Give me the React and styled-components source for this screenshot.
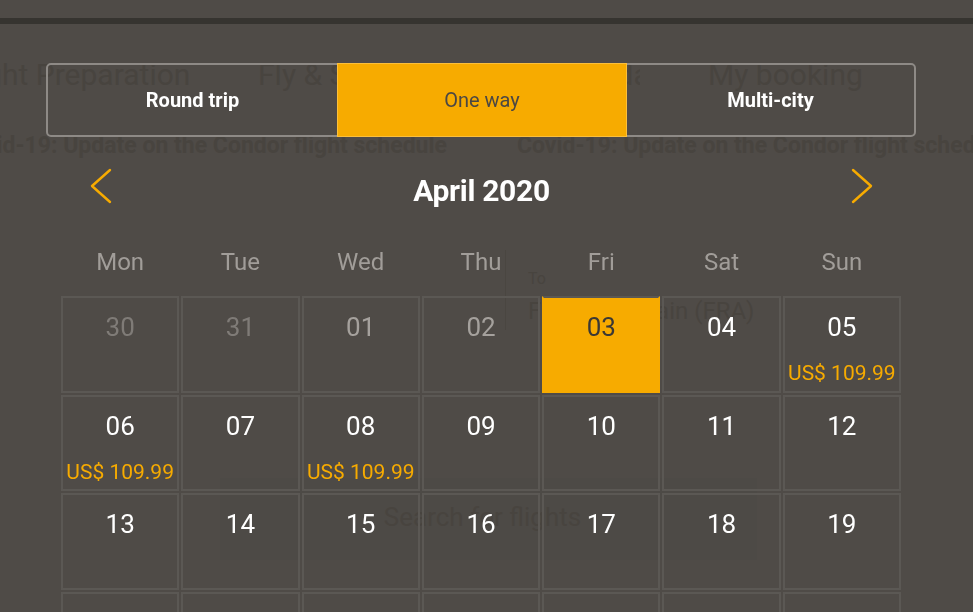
import React, { useState } from "react";
import styled, { createGlobalStyle, css } from "styled-components";

const sans = `Roboto, "Liberation Sans", sans-serif`;

const GlobalStyle = createGlobalStyle`
  html, body {
    margin: 0;
    padding: 0;
    overflow: hidden;
    background: #4f4b47;
    font-family: ${sans};
  }
  * { box-sizing: border-box; }
`;

// --- page behind the modal (seen only faintly through the overlay) ---
const Page = styled.div`
  min-height: 100vh;
  color: #48443f;
  white-space: nowrap;
`;

const TopBand = styled.div`
  height: 24px;
  border-bottom: 6px solid #363430;
`;

const GhostNav = styled.nav`
  display: grid;
  grid-template-columns: 236px 382px 160px;
  column-gap: 68px;
  margin: 33px 0 0 -46px;
  font-size: 30px;
  & > span { overflow: hidden; }
`;

const GhostNews = styled.div`
  display: grid;
  grid-template-columns: 490px 490px;
  column-gap: 70px;
  margin: 40px 0 0 -43px;
  font-weight: bold;
  font-size: 23px;
`;

const GhostField = styled.div`
  margin: 91px 0 0 505px;
  width: 260px;
  height: 80px;
  border-left: 1px solid #4a4641;
  padding: 19px 0 0 22px;
  font-size: 24px;
  & small { display: block; font-size: 16px; margin-bottom: 9px; }
`;

const GhostButton = styled.div`
  display: flex;
  align-items: center;
  justify-content: center;
  width: 537px;
  height: 82px;
  margin: 148px 0 0 220px;
  padding: 0 12px 4px 0;
  background: #4d4a46;
  font-size: 26px;
`;

// --- modal ---
const Overlay = styled.div`
  position: fixed;
  inset: 0;
  overflow: hidden;
`;

const Modal = styled.div`
  width: 870px;
  margin: 63px 0 0 46px;
`;

const Tabs = styled.div`
  display: grid;
  grid-template-columns: 289px 290px 1fr;
  height: 74px;
  border: 2px solid #8e8a86;
  border-radius: 5px;
`;

const Tab = styled.button`
  border: none;
  background: transparent;
  color: #ffffff;
  font: bold 20px ${sans};
  cursor: pointer;
  ${(p) =>
    p.$active &&
    css`
      margin: -2px 0;
      background: #f7ab00;
      border: 1px solid #fbbf3c;
      color: #4b4743;
      font-weight: normal;
    `}
`;

const CalHeader = styled.div`
  display: flex;
  align-items: center;
  justify-content: space-between;
  height: 50px;
  margin-top: 28px;
  padding: 0 43px 0 44px;
`;

const Title = styled.h2`
  margin: 0;
  color: #ffffff;
  font: bold 30px ${sans};
  letter-spacing: -0.3px;
`;

const Arrow = styled.button`
  display: flex;
  padding: 0;
  border: none;
  background: none;
  cursor: pointer;
  margin-top: -9px;
`;

const Weekdays = styled.div`
  display: grid;
  grid-template-columns: repeat(7, 1fr);
  column-gap: 2px;
  align-items: center;
  height: 52px;
  margin: 21px 15px 0;
  color: #a19d99;
  font-size: 24px;
  text-align: center;
`;

const Grid = styled.div`
  display: grid;
  grid-template-columns: repeat(7, 1fr);
  grid-auto-rows: 96.5px;
  gap: 2px;
  margin: 8px 15px 0;
`;

const tones = {
  muted: "#7f7b77",
  past: "#a5a19d",
  normal: "#ffffff",
  selected: "#3b3834",
};

const Cell = styled.div`
  display: flex;
  flex-direction: column;
  align-items: center;
  padding-top: 15px;
  border: 2px solid #5b5854;
  color: ${(p) => tones[p.$tone]};
  cursor: pointer;
  ${(p) =>
    p.$tone === "selected" &&
    css`
      background: #f7ab00;
      border-color: #f7ab00;
      border-top: 2px solid #5b5854;
    `}
`;

const DayNum = styled.span`
  font-size: 26px;
  line-height: 28px;
`;

const Price = styled.span`
  margin-top: 19px;
  color: #f7ab00;
  font-size: 21px;
  line-height: 26px;
  white-space: nowrap;
`;

const Chevron = ({ dir }) => (
  <svg width="22" height="36" viewBox="0 0 22 36">
    <polyline
      points={dir === "left" ? "20,2 2,18 20,34" : "2,2 20,18 2,34"}
      fill="none"
      stroke="#f7ab00"
      strokeWidth="2.4"
      strokeLinecap="round"
      strokeLinejoin="round"
    />
  </svg>
);

const price = "US$ 109.99";
const pad = (n) => String(n).padStart(2, "0");

const days = [
  { d: 30, tone: "muted" },
  { d: 31, tone: "muted" },
  { d: 1, tone: "past" },
  { d: 2, tone: "past" },
  ...Array.from({ length: 28 }, (_, i) => ({ d: i + 3, tone: "normal" })),
  { d: 1, tone: "muted" },
  { d: 2, tone: "muted" },
  { d: 3, tone: "muted" },
];
const prices = new Set([5, 6, 8]);

function App() {
	const [tab, setTab] = useState("One way");
	const [selected, setSelected] = useState(3);

	return (
		<>
			<GlobalStyle />
			<Page>
				<TopBand />
				<GhostNav>
					<span>Flight Preparation</span>
					<span>Fly &amp; Stay with Condor Holiday and</span>
					<span>My booking</span>
				</GhostNav>
				<GhostNews>
					<span>Covid-19: Update on the Condor flight schedule</span>
					<span>Covid-19: Update on the Condor flight schedule</span>
				</GhostNews>
				<GhostField>
					<small>To</small>
					Frankfurt/Main (FRA)
				</GhostField>
				<GhostButton>Search for flights</GhostButton>
			</Page>

			<Overlay>
				<Modal>
					<Tabs>
						{["Round trip", "One way", "Multi-city"].map((t) => (
							<Tab key={t} $active={t === tab} onClick={() => setTab(t)}>{t}</Tab>
						))}
					</Tabs>

					<CalHeader>
						<Arrow aria-label="Previous month"><Chevron dir="left" /></Arrow>
						<Title>April 2020</Title>
						<Arrow aria-label="Next month"><Chevron dir="right" /></Arrow>
					</CalHeader>

					<Weekdays>
						{["Mon", "Tue", "Wed", "Thu", "Fri", "Sat", "Sun"].map((w) => (
							<span key={w}>{w}</span>
						))}
					</Weekdays>

					<Grid>
						{days.map((day, i) => {
							const inMonth = day.tone !== "muted";
							const tone = inMonth && day.d === selected ? "selected" : day.tone;
							return (
								<Cell key={i} $tone={tone} onClick={() => day.tone === "normal" && setSelected(day.d)}>
									<DayNum>{pad(day.d)}</DayNum>
									{inMonth && prices.has(day.d) && <Price>{price}</Price>}
								</Cell>
							);
						})}
					</Grid>
				</Modal>
			</Overlay>
		</>
	);
}

export default App;
